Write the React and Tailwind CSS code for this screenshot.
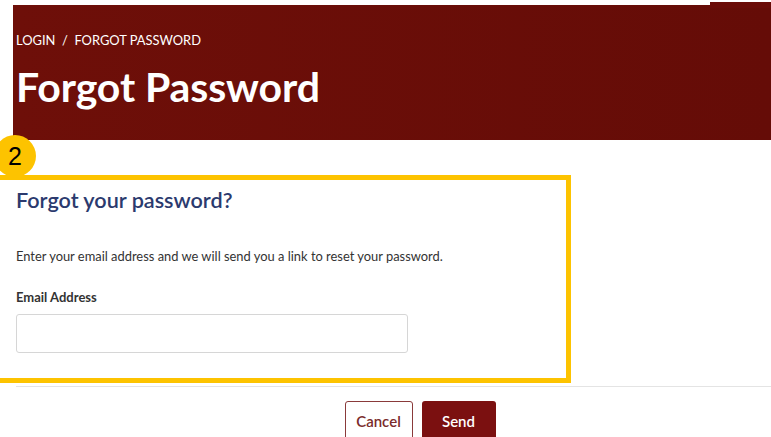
export default function App() {
  return (
    <div className="relative h-[437px] w-[771px] overflow-hidden bg-white font-['Lato','Liberation_Sans',sans-serif]">
      <PageHeader />
      <ResetForm />
      <div className="ml-[16px] mt-[3px] h-px bg-[#e4e4e4]" />
      <div className="mt-[14px] flex justify-center gap-[9px] pl-[69px]">
        <button className="h-[40px] w-[68px] rounded-[3px] border border-[#8a3a3a] bg-white text-[15px] font-semibold text-[#7a2b2b]">
          Cancel
        </button>
        <button className="h-[40px] w-[74px] rounded-[3px] bg-[#7b1010] text-[15px] font-semibold text-white">
          Send
        </button>
      </div>
    </div>
  );
}

function PageHeader() {
  return (
    <div className="relative pt-[5px]">
      {/* small tab that sticks up on the right of the banner */}
      <div className="absolute right-0 top-[2px] h-[6px] w-[61px] bg-[#6a0c08]" />
      <div className="ml-[13px] h-[135px] bg-gradient-to-r from-[#6e0f09] to-[#650c07] pl-[3px] pt-[27px] text-white">
        <div className="text-[12.9px] leading-[16px]">LOGIN&nbsp;&nbsp;/&nbsp;&nbsp;FORGOT PASSWORD</div>
        <h1 className="mt-[15px] text-[41px] font-bold leading-[48px] tracking-[-0.1px]">Forgot Password</h1>
      </div>
    </div>
  );
}

function ResetForm() {
  return (
    <div className="relative mt-[35px]">
      {/* numbered callout badge */}
      <div className="absolute left-[-6px] top-[-40px] flex h-[42px] w-[42px] items-center justify-center rounded-full bg-[#fdc300] pt-[2px] font-['Liberation_Sans',sans-serif] text-[25px] text-black">
        2
      </div>
      <div className="relative -ml-[10px] h-[208px] w-[581px] border-[5px] border-[#fdc300] pl-[21px] pt-[5px]">
        <h2 className="text-[21.6px] font-semibold leading-[30px] text-[#2b3a6e]">Forgot your password?</h2>
        <p className="mt-[33px] text-[12.9px] leading-[16px] text-[#333]">
          Enter your email address and we will send you a link to reset your password.
        </p>
        <label className="mt-[25px] block text-[13px] font-bold leading-[16px] text-[#333]">Email Address</label>
        <input
          type="email"
          className="mt-[9px] h-[39px] w-[392px] rounded-[3px] border border-[#d6d6d6] bg-white"
        />
      </div>
    </div>
  );
}
